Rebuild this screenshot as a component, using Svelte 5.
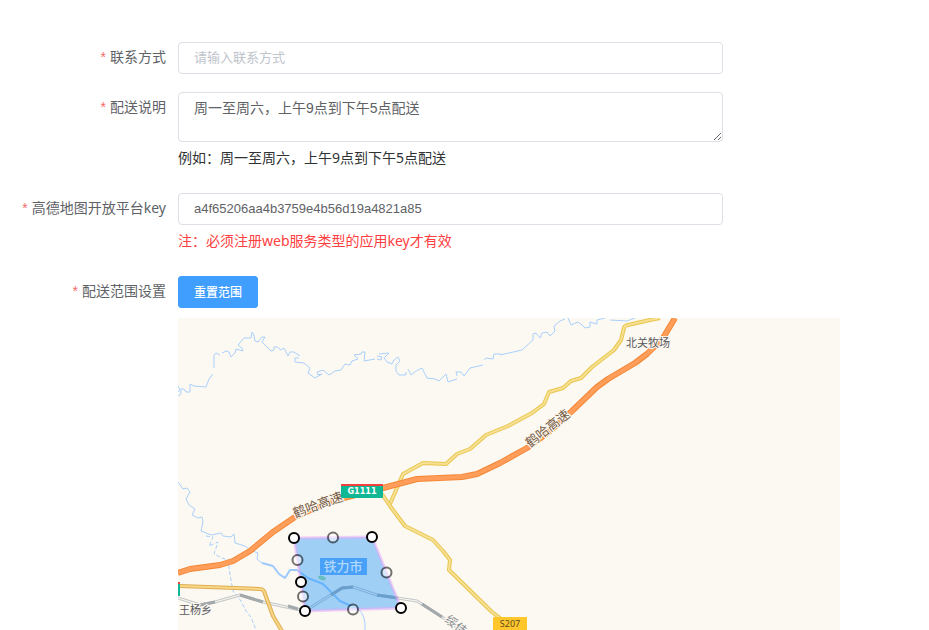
<script lang="ts">
    let contact = '';
    let description = '周一至周六，上午9点到下午5点配送';
    let mapKey = 'a4f65206aa4b3759e4b56d19a4821a85';

    type Point = [number, number];

    const savedRange: Point[] = [[116, 220], [194, 219], [223, 290], [127, 293], [123, 264]];
    let range: Point[] = savedRange;

    function resetRange() {
        range = [...savedRange];
    }

    // handle between each pair of neighbouring corners
    $: midpoints = range.map(([x, y], i) => {
        const [nx, ny] = range[(i + 1) % range.length];
        return [(x + nx) / 2, (y + ny) / 2];
    });

    const highway = 'M0 255L12 251L42 247L55 243L72 233L95 214L117 199L150 184L205 170L239 161L284 159L299 156L322 145L349 130L372 113L394 93L419 69L430 61L457 45L469 36L485 20L497 0';
    const countyRoad = 'M482 0L472 2L450 7Q446 8 446 10L443 22L436 32L414 49L403 60L393 63L385 70L371 74L366 86L354 95L330 108L308 117L292 131L279 136L268 146L245 145L225 156L212 186';
    const provincialRoad = 'M204 176L212 188L227 208L255 222L265 233L272 242L271 252L314 294L326 303';
    const westRoad = 'M2 268L82 271Q86 271 87 276L95 298L104 313';
    const railway = 'M0 280L22 287L37 284L62 277L85 284L127 293L164 270L175 269L199 277L239 283L264 299L295 320';
    const railwayDark = 'M22 287L37 284M62 277L85 284M110 288L120 291M153 277L164 270L175 269M199 277L220 280M244 286L264 299';
    const northRiver = 'M0 68L2 72L0 74M0 78L3 76L3 71L6 71L8 74L12 74L12 66L16 68L28 69L31 61L35 56M36 50L36 37L38 35L42 37M44 35L48 33L51 34L53 39L57 35L58 31L65 33L64 30L60 27L66 20L73 20L74 14L76 17L77 23L80 24L84 19L87 19L84 24L93 33L96 32L96 29L99 29L103 32L106 30L110 38L112 34L116 34L122 38M121 40L117 40L117 44L126 45L132 50L130 55L137 60L144 56L140 57L139 54L145 52L151 57L157 53L163 52L167 46L172 47L174 43L180 41L176 37L183 36L184 34L187 34L186 43L197 41M199 38L204 39L203 42L199 41M201 36L211 35L206 40L209 44L214 46L216 42L220 39L222 43L218 47L218 53L221 57L228 57L228 54M230 51L233 57L238 53L244 50L249 60L257 61L261 63L268 56L270 64L279 61M279 58L278 54L283 54L286 58L292 50L305 47M306 42L308 40L315 41L316 36L323 36M322 37L344 32L355 22L355 16L358 15L362 20L364 15L369 14L372 18L377 13L376 8L382 3L387 1M390 0L393 7L400 4L404 7L407 10L412 9L412 4L419 6L419 2L427 0M432 2L449 3L457 0';
    const westRiver = 'M0 164L5 171L9 170L12 174L8 181L11 187L17 191L14 197L20 200L24 199L25 204L23 213L33 217L43 215L45 218L53 219L56 216L57 225L67 228L72 232L80 235L79 241L84 245';
    const cityRiver = 'M84 245L95 248L101 256L107 260L112 252L119 252L130 260L145 266L162 283L180 291';
    const southRiver = 'M180 291Q188 297 187 312';
    const brook = 'M28 218L35 219L31 228L40 224L36 236L44 240L50 242L52 256L55 273L63 283L68 293L73 299L78 312';
</script>

<form class="form" on:submit|preventDefault>
    <div class="form-item">
        <label for="contact">联系方式</label>
        <div class="content">
            <input id="contact" type="text" placeholder="请输入联系方式" bind:value={contact}>
        </div>
    </div>

    <div class="form-item">
        <label for="description">配送说明</label>
        <div class="content">
            <textarea id="description" bind:value={description}></textarea>
            <p>例如：周一至周六，上午9点到下午5点配送</p>
        </div>
    </div>

    <div class="form-item">
        <label for="map-key">高德地图开放平台key</label>
        <div class="content">
            <input id="map-key" type="text" bind:value={mapKey}>
            <p class="warning">注：必须注册web服务类型的应用key才有效</p>
        </div>
    </div>

    <div class="form-item">
        <label for="reset-range">配送范围设置</label>
        <div class="content">
            <button id="reset-range" type="button" on:click={resetRange}>重置范围</button>
            <div class="map">
                <svg viewBox="0 0 662 312" role="img" aria-label="配送范围地图">
                    <path class="river" d={northRiver} />
                    <path class="river" d={westRiver} />
                    <path class="river wide" d={cityRiver} />
                    <path class="river" d={southRiver} />
                    <path class="river brook" d={brook} />
                    <ellipse cx="144" cy="260" rx="4" ry="2" fill="#9bdc9b" transform="rotate(20 144 260)" />

                    <path class="rail-edge" d={railway} />
                    <path class="rail-fill" d={railway} />
                    <path class="rail-dark" d={railwayDark} />

                    {#each [countyRoad, provincialRoad] as road}
                        <path class="road-edge" d={road} />
                        <path class="road-fill" d={road} />
                    {/each}
                    <path class="road-edge west-edge" d={westRoad} />
                    <path class="road-fill west-fill" d={westRoad} />
                    <path class="highway-edge" d={highway} />
                    <path class="highway-fill" d={highway} />

                    <path id="north-name" d="M352 130L398 94" />
                    <path id="south-name" d="M117 200L172 180" />
                    <text class="road-name"><textPath href="#north-name">鹤哈高速</textPath></text>
                    <text class="road-name"><textPath href="#south-name">鹤哈高速</textPath></text>
                    <text class="rail-name" transform="translate(266 303) rotate(38)">绥佳</text>
                    <text class="place" x="448" y="29">北关牧场</text>
                    <text class="place" x="1" y="296">王杨乡</text>

                    <rect x="0" y="265" width="2" height="13" fill="#0fb795" />
                    <rect x="0" y="264" width="2" height="2" fill="#f5413c" />
                    <rect x="163" y="166" width="42" height="14" rx="1" fill="#0fb795" />
                    <rect x="163" y="166" width="42" height="2" fill="#f5413c" />
                    <text class="highway-code" x="184" y="176">G1111</text>
                    <rect x="315" y="299" width="34" height="16" rx="1" fill="#ffc72b" />
                    <text class="road-code" x="332" y="309">S207</text>

                    <polygon class="range" points={range.map((point) => point.join(',')).join(' ')} />
                    <rect x="142" y="240" width="47" height="17" fill="#48a0f8" />
                    <text class="city" x="165" y="253">铁力市</text>

                    {#each midpoints as [x, y]}
                        <circle class="handle mid" cx={x} cy={y} r="5" />
                    {/each}
                    {#each range as [x, y]}
                        <circle class="handle" cx={x} cy={y} r="5" />
                    {/each}
                </svg>
            </div>
        </div>
    </div>
</form>

<style>
    :global(body) {
        margin: 0;
        background: #fff;
    }

    .form {
        padding-top: 42px;
        color: #303133;
        font-family: "Noto Sans", "Noto Sans CJK SC", sans-serif;
        font-size: 14px;
    }

    .form-item {
        display: flex;
        margin-bottom: 18px;
    }

    .form-item:last-child {
        margin-bottom: 0;
    }

    label {
        flex: 0 0 178px;
        box-sizing: border-box;
        padding-right: 12px;
        color: #606266;
        line-height: 30px;
        text-align: right;
    }

    label::before {
        content: "*";
        margin-right: 4px;
        color: #f56c6c;
        font-family: "Liberation Sans", sans-serif;
    }

    .content {
        flex: 1;
        min-width: 0;
        max-width: 662px;
    }

    input,
    textarea {
        display: block;
        box-sizing: border-box;
        width: 100%;
        max-width: 545px;
        height: 32px;
        padding: 0 15px 2px;
        border: 1px solid #dcdfe6;
        border-radius: 4px;
        background: #fff;
        color: #606266;
        font-family: "Liberation Sans", "Noto Sans CJK SC", sans-serif;
        font-size: 13px;
        outline: none;
    }

    textarea {
        height: 50px;
        padding: 5px 15px;
        font-size: 14px;
        line-height: 20px;
        resize: vertical;
    }

    input:focus,
    textarea:focus {
        border-color: #409eff;
    }

    input::placeholder {
        color: #c0c4cc;
    }

    p {
        margin: 0 0 2px;
        line-height: 31px;
    }

    .warning {
        color: #ff4040;
    }

    button {
        display: block;
        height: 32px;
        padding: 0 15px;
        border: 1px solid #409eff;
        border-radius: 3px;
        background: #409eff;
        color: #fff;
        font-family: inherit;
        font-size: 12px;
        font-weight: 500;
        cursor: pointer;
    }

    .map {
        margin-top: 10px;
        overflow: hidden;
        background: #fcf9f2;
    }

    svg {
        display: block;
        width: 100%;
    }

    svg path {
        fill: none;
        stroke-linejoin: round;
    }

    .river {
        stroke: #a9d0fc;
        stroke-width: 1;
    }

    .wide {
        stroke: #9ccaff;
        stroke-width: 2;
    }

    .brook {
        stroke-dasharray: 4 2;
    }

    .rail-edge {
        stroke: #c3c7c9;
        stroke-width: 3;
    }

    .rail-fill {
        stroke: #fcf9f2;
        stroke-width: 1;
    }

    .rail-dark {
        stroke: #a3a9ab;
        stroke-width: 3;
    }

    .road-edge {
        stroke: #e9c64d;
        stroke-width: 4;
    }

    .road-fill {
        stroke: #f6e093;
        stroke-width: 2;
    }

    .west-edge {
        stroke: #dfae50;
    }

    .west-fill {
        stroke: #f8d788;
    }

    .highway-edge {
        stroke: #f58735;
        stroke-width: 6;
    }

    .highway-fill {
        stroke: #ff9e5b;
        stroke-width: 4;
    }

    svg text {
        font-family: "Noto Sans", "Noto Sans CJK SC", sans-serif;
        paint-order: stroke;
        stroke: #fcf9f2;
        stroke-width: 2px;
    }

    .road-name {
        fill: #755a42;
        font-size: 13px;
    }

    .rail-name {
        fill: #858b90;
        font-size: 12px;
    }

    .place {
        fill: #58585c;
        font-size: 11px;
    }

    svg .highway-code {
        fill: #fff;
        stroke: none;
        font-family: "DejaVu Sans Condensed", "DejaVu Sans", sans-serif;
        font-size: 9px;
        font-weight: bold;
        text-anchor: middle;
    }

    svg .road-code {
        fill: #5b4a20;
        stroke: none;
        font-size: 9px;
        text-anchor: middle;
    }

    svg .city {
        fill: #b0d8fc;
        stroke: none;
        font-size: 13px;
        font-weight: 500;
        text-anchor: middle;
    }

    .range {
        fill: #1791fc;
        fill-opacity: 0.4;
        stroke: #e3a6fa;
        stroke-opacity: 0.5;
        stroke-width: 3;
    }

    .handle {
        fill: #fff;
        stroke: #000;
        stroke-width: 2;
        cursor: move;
    }

    .mid {
        opacity: 0.55;
    }
</style>
